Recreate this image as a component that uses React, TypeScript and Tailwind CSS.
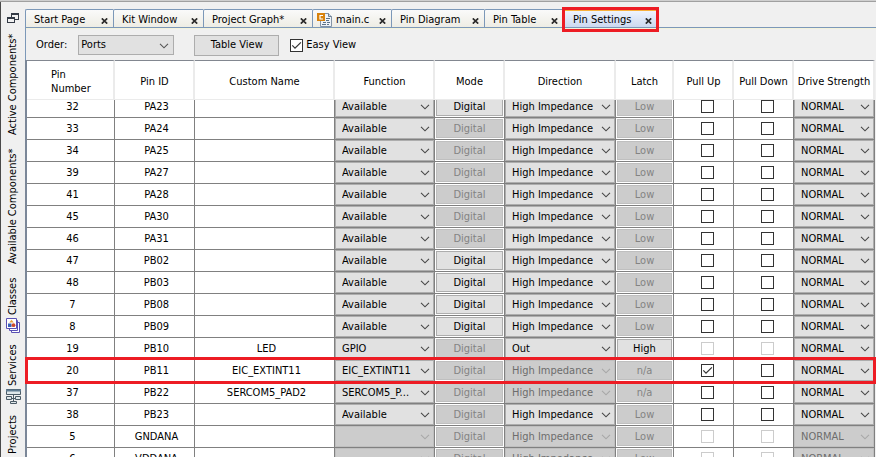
import { useLayoutEffect, useRef } from "react";

type Row = {
  pin: string;
  id: string;
  name?: string;
  fn?: string;
  mode?: boolean;
  dir?: string;
  dirOff?: boolean;
  latch?: string;
  latchOn?: boolean;
  pullOff?: boolean;
  pullUp?: boolean;
  off?: boolean;
  marked?: boolean;
};

const rows: Row[] = [
  { pin: "32", id: "PA23", mode: true },
  { pin: "33", id: "PA24" },
  { pin: "34", id: "PA25" },
  { pin: "39", id: "PA27" },
  { pin: "41", id: "PA28" },
  { pin: "45", id: "PA30" },
  { pin: "46", id: "PA31" },
  { pin: "47", id: "PB02", mode: true },
  { pin: "48", id: "PB03", mode: true },
  { pin: "7", id: "PB08", mode: true },
  { pin: "8", id: "PB09", mode: true },
  { pin: "19", id: "PB10", name: "LED", fn: "GPIO", dir: "Out", latch: "High", latchOn: true, pullOff: true },
  { pin: "20", id: "PB11", name: "EIC_EXTINT11", fn: "EIC_EXTINT11", dirOff: true, latch: "n/a", pullUp: true, marked: true },
  { pin: "37", id: "PB22", name: "SERCOM5_PAD2", fn: "SERCOM5_P...", dirOff: true, latch: "n/a" },
  { pin: "38", id: "PB23" },
  { pin: "5", id: "GNDANA", fn: "", off: true },
  { pin: "6", id: "VDDANA", fn: "", off: true },
];

function Chevron({ className }: { className: string }) {
  return (
    <svg viewBox="0 0 10 6" className={`pointer-events-none absolute h-[6px] w-[10px] ${className}`} fill="none" stroke="currentColor" strokeWidth="1.1">
      <path d="M1 0.8 5 4.8 9 0.8" />
    </svg>
  );
}

function CellSelect({ value, off, label }: { value: string; off?: boolean; label: string }) {
  return (
    <div className="relative h-[21px]">
      <select
        aria-label={label}
        disabled={off}
        defaultValue={value}
        className="block h-full w-full appearance-none border border-[#adadad] bg-[#e1e1e1] pl-[6px] text-black opacity-100 disabled:border-[#bfbfbf] disabled:bg-[#cccccc] disabled:text-[#6d6d6d]"
      >
        <option>{value}</option>
      </select>
      <Chevron className={off ? "right-[4px] top-[8px] text-[#a8a8a8]" : "right-[4px] top-[8px] text-[#484848]"} />
    </div>
  );
}

function CellButton({ children, on }: { children: string; on?: boolean }) {
  return (
    <button
      disabled={!on}
      className="block h-[19px] w-full border border-[#adadad] bg-[#e1e1e1] text-center leading-[17px] text-black disabled:border-[#bfbfbf] disabled:bg-[#cccccc] disabled:text-[#838383]"
    >
      {children}
    </button>
  );
}

function Tick({ checked, off, label, id }: { checked?: boolean; off?: boolean; label?: string; id?: string }) {
  return (
    <span className="relative block size-[13px]">
      <input
        id={id}
        type="checkbox"
        aria-label={label}
        defaultChecked={checked}
        disabled={off}
        className="peer block size-[13px] appearance-none border border-[#333333] bg-white disabled:border-[#cccccc]"
      />
      <svg viewBox="0 0 13 13" className="pointer-events-none absolute inset-0 hidden size-[13px] peer-checked:block" fill="none" stroke="#333" strokeWidth="1.2">
        <path d="M2.3 6.4 5 9.2 10.9 3.3" />
      </svg>
    </span>
  );
}

function CodeFileIcon() {
  return (
    <svg viewBox="0 0 16 16" className="size-4 shrink-0">
      <path d="M3.500 1.500h8l3 3v10h-11z" fill="#eef3f8" stroke="#8494a5" />
      <path d="M11.500 1.500v3h3" fill="#c9d8e6" stroke="#6d7f92" />
      <path d="M9 6.500h4M6 10.500h3M10 10.500h3M5 12.500h4M10 12.500h2M9 8.500h3" stroke="#5d7286" />
      <rect x="0" y="1" width="8" height="8" fill="#d8820b" />
      <path d="M6 3.500H3v3.500h3" fill="none" stroke="#fff" strokeWidth="1.2" />
    </svg>
  );
}

function CloseIcon() {
  return (
    <svg viewBox="0 0 7 6" className="h-[6px] w-[7px]" fill="none" stroke="#2b2b2b" strokeWidth="1.7">
      <path d="M0.8 0.4 6.2 5.6M6.2 0.4 0.8 5.6" />
    </svg>
  );
}

const tabs = [
  { label: "Start Page", width: "w-[88px]" },
  { label: "Kit Window", width: "w-[90px]" },
  { label: "Project Graph*", width: "w-[109px]" },
  { label: "main.c", width: "w-[79px]", icon: true },
  { label: "Pin Diagram", width: "w-[93px]" },
  { label: "Pin Table", width: "w-[79px]" },
];

const side = "rotate-180 [writing-mode:vertical-rl] leading-[14px] whitespace-nowrap";

function Sidebar() {
  return (
    <nav className="flex w-[25px] shrink-0 flex-col items-center border-l border-[#4a4a4a] bg-[#f0f0f0]">
      <button aria-label="Restore window group" className="mt-[11px] mb-[11px]">
        <svg viewBox="0 0 12 11" className="h-[11px] w-[12px]" fill="#f0f0f0" stroke="#333a45">
          <rect x="4.5" y="0.5" width="7" height="6" />
          <path d="M4 1h8" strokeWidth="2" />
          <rect x="0.5" y="4.5" width="7" height="5" />
          <path d="M0 5h8" strokeWidth="2" />
        </svg>
      </button>
      <button className={`${side} h-[100px] text-left`}>Active Components*</button>
      <button className={`${side} mt-[14px] h-[115px]`}>Available Components*</button>
      <button className="mt-[13px] flex flex-col items-center gap-[3px]">
        <span className={`${side} h-[38px]`}>Classes</span>
        <svg viewBox="0 0 15 16" className="h-4 w-[15px]" fill="#fff" stroke="#5a50b4">
          <path d="M5.5 4.5h8v10h-8z" />
          <path d="M3.5 2.5h8v10h-8z" />
          <path d="M0.5 0.5h10v10h-10z" />
          <path d="M5.5 1.8 7.8 4.6H3.2z" fill="#e9a23b" stroke="none" />
          <rect x="2" y="5.5" width="3.5" height="3.5" fill="#3a62b8" stroke="none" />
          <circle cx="7.5" cy="7.2" r="1.9" fill="#cf4a2a" stroke="none" />
        </svg>
      </button>
      <button className="mt-[11px] flex flex-col items-center gap-[3px]">
        <span className={`${side} h-[41px]`}>Services</span>
        <svg viewBox="0 0 15 16" className="h-4 w-[15px]" fill="#dfe7ea" stroke="#4b5b66">
          <path d="M0.5 0.5h14v5H0.500z" />
          <path d="M0 1.500h15" strokeWidth="2" stroke="#5f7c92" />
          <path d="M7.500 5.500v7M5 9.500h5" fill="none" />
          <path d="M0.500 7.500h5v3h-5zM9.500 7.500h5v3h-5zM4.500 12.500h6v2h-6z" />
        </svg>
      </button>
      <button className={`${side} mt-[9px] h-[41px]`}>Projects</button>
    </nav>
  );
}

const th = "border-r-2 border-b border-[#ebebeb] bg-white px-0 pt-[3px] pb-0 text-center font-normal";
const td = "h-[22px] border-r border-b border-[#808080] p-0 text-center";

export default function App() {
  const scroller = useRef<HTMLDivElement>(null);
  // The list opens scrolled a little, so the first row is partly under the header.
  useLayoutEffect(() => {
    if (scroller.current) scroller.current.scrollTop = 4;
  }, []);

  return (
    <div className="h-screen overflow-hidden bg-white pr-2 pb-[7px] font-['DejaVu_Sans_Condensed','DejaVu_Sans',sans-serif] text-[11px] leading-[14px] text-black">
      <div className="flex h-full flex-col bg-[#f0f0f0]">
        <div className="h-[2px] shrink-0 border-b border-[#a0a0a0] bg-[#cfcfcf]" />
        <div className="flex min-h-0 flex-1">
          <Sidebar />
          <main className="flex min-w-0 flex-1 flex-col">
            <div role="tablist" className="mt-[7px] flex h-[19px] shrink-0 border-b border-[#7c98b8]">
              {tabs.map((t) => (
                <div key={t.label} className={`${t.width} flex items-center rounded-tl-[2px] border-t border-l border-[#7c98b8] bg-linear-to-b from-[#fafafa] to-[#eeede4] pt-[2px] pr-[5px] ${t.icon ? "pl-[4px]" : "pl-[8px]"}`}>
                  <button role="tab" className="flex flex-1 items-center gap-[3px] whitespace-nowrap">
                    {t.icon && <CodeFileIcon />}
                    {t.label}
                  </button>
                  <button aria-label={`Close ${t.label}`} className="mt-[2px]">
                    <CloseIcon />
                  </button>
                </div>
              ))}
              <div className="relative flex w-[94px] items-center border-t-2 border-r border-t-[#f8b03c] border-r-[#7c98b8] bg-linear-to-b from-[#eff4fd] to-[#ccd9f0] pt-[1px] pr-[4px] pl-[10px]">
                <button role="tab" aria-selected="true" className="flex-1 text-left whitespace-nowrap">
                  Pin Settings
                </button>
                <button aria-label="Close Pin Settings" className="mt-[2px]">
                  <CloseIcon />
                </button>
                <span className="pointer-events-none absolute -top-1 -right-[3px] -bottom-[5px] left-[-1px] z-10 border-3 border-[#ed1c24]" />
              </div>
            </div>
            <div className="flex h-[32px] shrink-0 items-center border-l border-[#7c98b8] pt-[2px] pl-[10px] shadow-[inset_0_2px_0_-1px_#f3f3dc]">
              <label htmlFor="order">Order:</label>
              <div className="relative ml-[11px] h-5 w-24">
                <select id="order" className="block h-full w-full appearance-none border border-[#adadad] bg-[#e1e1e1] pl-[2px]">
                  <option>Ports</option>
                </select>
                <Chevron className="top-[8px] right-[5px] text-[#555]" />
              </div>
              <button className="ml-[20px] h-[21px] w-[85px] border border-[#adadad] bg-[#e1e1e1]">Table View</button>
              <label htmlFor="easy" className="ml-[11px] flex items-center gap-[3px]">
                <Tick id="easy" checked />
                Easy View
              </label>
            </div>
            <div ref={scroller} className="min-h-0 flex-1 overflow-hidden pr-px">
              <table className="w-full table-fixed border-separate border-spacing-0 border-l-2 border-[#7b8798] bg-white">
                <colgroup>
                  <col className="w-[88px]" />
                  <col className="w-[80px]" />
                  <col />
                  <col className="w-[100px]" />
                  <col className="w-[70px]" />
                  <col className="w-[111px]" />
                  <col className="w-[58px]" />
                  <col className="w-[60px]" />
                  <col className="w-[60px]" />
                  <col className="w-[81px]" />
                </colgroup>
                <thead className="sticky top-0 z-10">
                  <tr className="h-[40px]">
                    <th className={`${th} border-t border-t-[#828790]`}>
                      <span className="inline-block w-[38px] text-left align-middle">Pin Number</span>
                    </th>
                    {["Pin ID", "Custom Name", "Function", "Mode", "Direction", "Latch", "Pull Up", "Pull Down", "Drive Strength"].map((h) => (
                      <th key={h} className={`${th} border-t border-t-[#828790] pl-px whitespace-nowrap`}>
                        {h}
                      </th>
                    ))}
                  </tr>
                </thead>
                <tbody>
                  {rows.map((r) => (
                    <tr key={r.id} className="relative">
                      <td className={`${td} pl-[4px]`}>
                        {r.pin}
                        {r.marked && <span className="pointer-events-none absolute -top-[3px] -right-px -bottom-[2px] -left-[2px] z-[1] border-3 border-[#ed1c24]" />}
                      </td>
                      <td className={`${td} pl-[4px]`}>{r.id}</td>
                      <td className={`${td} pl-[4px]`}>{r.name}</td>
                      <td className={td}>
                        <CellSelect value={r.fn ?? "Available"} off={r.off} label={`Function of ${r.id}`} />
                      </td>
                      <td className={`${td} px-px`}>
                        <CellButton on={r.mode}>Digital</CellButton>
                      </td>
                      <td className={td}>
                        <CellSelect value={r.dir ?? "High Impedance"} off={r.off || r.dirOff} label={`Direction of ${r.id}`} />
                      </td>
                      <td className={`${td} px-px`}>
                        <CellButton on={r.latchOn}>{r.latch ?? "Low"}</CellButton>
                      </td>
                      <td className={td}>
                        <div className="flex justify-center pl-[8px]">
                          <Tick label={`Pull up ${r.id}`} checked={r.pullUp} off={r.off || r.pullOff} />
                        </div>
                      </td>
                      <td className={td}>
                        <div className="flex justify-center pl-[8px]">
                          <Tick label={`Pull down ${r.id}`} off={r.off || r.pullOff} />
                        </div>
                      </td>
                      <td className={td}>
                        <CellSelect value="NORMAL" off={r.off} label={`Drive strength of ${r.id}`} />
                      </td>
                    </tr>
                  ))}
                </tbody>
              </table>
            </div>
          </main>
        </div>
      </div>
    </div>
  );
}
